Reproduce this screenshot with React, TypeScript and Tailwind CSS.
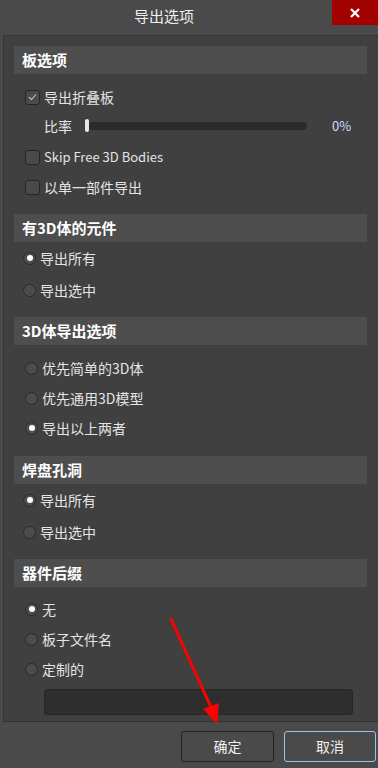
import React from "react"

const font = { fontFamily: '"Noto Sans CJK SC", "Noto Sans", sans-serif' }

function Header({ title }: { title: string }) {
  return (
    <div className="h-[28px] w-[353px] bg-[#4e4e4e] flex items-center pl-[8px] text-[15px] font-bold text-white">
      {title}
    </div>
  )
}

function Checkbox({ label, checked, size = "text-[14px]" }: { label: string; checked?: boolean; size?: string }) {
  return (
    <div className={`h-[30px] flex items-center pl-[11px] gap-[4px] text-[#e4e4e4] ${size}`}>
      <span className="w-[15px] h-[15px] rounded-[3px] border border-[#252525] bg-[#4a4a4a] flex items-center justify-center">
        {checked && (
          <svg width="9" height="8" viewBox="0 0 9 8">
            <path d="M1 4.2 L3.5 6.5 L8 1.5" fill="none" stroke="#c8c8c8" strokeWidth="1.1" />
          </svg>
        )}
      </span>
      {label}
    </div>
  )
}

function Radio({ label, on, indent = "pl-[9px]" }: { label: string; on?: boolean; indent?: string }) {
  return (
    <div className={`h-[30px] flex items-center gap-[4px] text-[14px] text-[#e4e4e4] ${indent}`}>
      <span className="w-[13px] h-[13px] rounded-full border border-[#2a2a2a] bg-[#4c4c4c] flex items-center justify-center">
        {on && <span className="w-[6px] h-[6px] rounded-full bg-white" />}
      </span>
      {label}
    </div>
  )
}

export default function App() {
  return (
    <div style={font} className="relative w-[378px] h-[768px] bg-[#4a4a4a] flex flex-col overflow-hidden">
      {/* Title bar */}
      <div className="h-[35px] flex items-start">
        <div className="flex-1 h-[33px] flex items-center justify-center text-[15px] text-[#f0f0f0] pr-[4px]">导出选项</div>
        <div className="w-[46px] h-[25px] bg-[#a30000] flex items-center justify-center">
          <svg width="10" height="10" viewBox="0 0 10 10">
            <path d="M1 1 L9 9 M9 1 L1 9" stroke="white" strokeWidth="2.2" />
          </svg>
        </div>
      </div>

      {/* Panel */}
      <div className="ml-[3px] w-[380px] border border-[#333333] bg-[#404040] pl-[10px] pt-[10px] pb-[6px]">
        <Header title="板选项" />
        <div className="mt-[8px] mb-[12px]">
          <Checkbox label="导出折叠板" checked />
          <div className="h-[28px] flex items-center text-[14px] text-[#e4e4e4]">
            <span className="w-[30px] ml-[30px]">比率</span>
            <div className="relative ml-[11px] w-[222px] h-[8px] rounded-full bg-[#2b2b2b]">
              <span className="absolute left-0 top-[-3px] w-[4px] h-[13px] rounded-[2px] bg-[#e8e8e8]" />
            </div>
            <span className="ml-[25px] text-[13px] text-[#d0dcff]">0%</span>
          </div>
          <div className="h-[2px]" />
          <Checkbox label="Skip Free 3D Bodies" size="text-[13px]" />
          <Checkbox label="以单一部件导出" />
        </div>

        <Header title="有3D体的元件" />
        <div className="mt-[1px] mb-[12px] flex flex-col gap-[2px]">
          <Radio label="导出所有" on />
          <Radio label="导出选中" />
        </div>

        <Header title="3D体导出选项" />
        <div className="mt-[8px] mb-[13px]">
          <Radio label="优先简单的3D体" indent="pl-[11px]" />
          <Radio label="优先通用3D模型" indent="pl-[11px]" />
          <Radio label="导出以上两者" on indent="pl-[11px]" />
        </div>

        <Header title="焊盘孔洞" />
        <div className="mt-[1px] mb-[12px] flex flex-col gap-[2px]">
          <Radio label="导出所有" on />
          <Radio label="导出选中" />
        </div>

        <Header title="器件后缀" />
        <div className="mt-[7px]">
          <Radio label="无" on indent="pl-[11px]" />
          <Radio label="板子文件名" indent="pl-[11px]" />
          <Radio label="定制的" indent="pl-[11px]" />
        </div>
        <div className="mt-[5px] ml-[30px] w-[309px] h-[26px] rounded-[3px] border border-[#262626] bg-[#2e2e2e]" />
      </div>

      {/* Buttons */}
      <div className="mt-[9px] flex justify-end gap-[10px] pr-[2px]">
        <button className="w-[93px] h-[31px] rounded-[3px] border border-[#232323] bg-[#4a4a4a] text-[14px] text-[#f0f0f0]">确定</button>
        <button className="w-[92px] h-[31px] rounded-[3px] border border-[#9cc4f0] bg-[#4a4a4a] text-[14px] text-[#f0f0f0]">取消</button>
      </div>

      {/* Annotation arrow */}
      <svg className="absolute left-0 top-0 pointer-events-none" width="378" height="768">
        <line x1="171" y1="619" x2="214" y2="714" stroke="#ff0000" strokeWidth="3" strokeLinecap="round" />
        <polygon points="217,724 203,709 219,703" fill="#ff0000" />
      </svg>
    </div>
  )
}
